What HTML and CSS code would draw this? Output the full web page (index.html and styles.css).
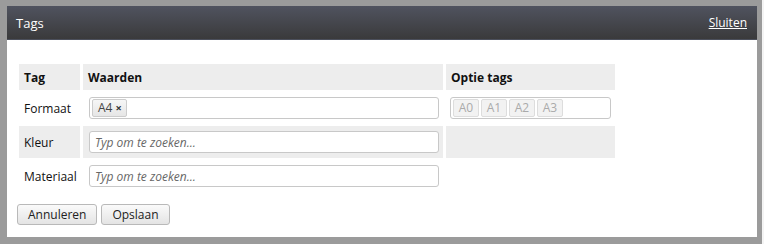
FILE: index.html
```html
<!DOCTYPE html>
<html lang="nl">
<head>
    <meta charset="UTF-8">
    <title>Tags</title>
    <link rel="stylesheet" href="styles.css">
</head>
<body>
    <div class="dialog">
        <div class="dialog-header">
            <span class="dialog-title">Tags</span>
            <a href="#" class="close-link">Sluiten</a>
        </div>
        <div class="dialog-body">
            <table class="tag-table">
                <thead>
                    <tr>
                        <th class="col-tag">Tag</th>
                        <th class="col-values">Waarden</th>
                        <th class="col-options">Optie tags</th>
                    </tr>
                </thead>
                <tbody>
                    <tr>
                        <td>Formaat</td>
                        <td>
                            <div class="tag-input">
                                <span class="chip">A4 <span class="chip-x">&times;</span></span>
                            </div>
                        </td>
                        <td>
                            <div class="tag-input options">
                                <span class="chip muted">A0</span><span class="chip muted">A1</span><span class="chip muted">A2</span><span class="chip muted">A3</span>
                            </div>
                        </td>
                    </tr>
                    <tr class="alt">
                        <td>Kleur</td>
                        <td><input type="text" class="search" placeholder="Typ om te zoeken..."></td>
                        <td></td>
                    </tr>
                    <tr>
                        <td>Materiaal</td>
                        <td><input type="text" class="search" placeholder="Typ om te zoeken..."></td>
                        <td></td>
                    </tr>
                </tbody>
            </table>
            <div class="actions">
                <button>Annuleren</button>
                <button>Opslaan</button>
            </div>
        </div>
    </div>
</body>
</html>
```

FILE: styles.css
```css
body {
    margin: 0;
    height: 244px;
    overflow: hidden;
    font-family: "Open Sans", "DejaVu Sans", sans-serif;
    font-size: 12px;
    color: #111;
    background: linear-gradient(to right, #9b9b9b 762px, #f4f4f4 762px);
}
.dialog {
    margin: 6px 0 0 7px;
    width: 750px;
    height: 231px;
    background-color: #fff;
}
.dialog-header {
    height: 34px;
    box-sizing: border-box;
    padding: 0 10px 0 9px;
    display: flex;
    justify-content: space-between;
    align-items: center;
    background: linear-gradient(#50535f, #3a3a3b);
    border-bottom: 1px solid #4b4f5b;
    color: #fff;
}
.dialog-title {
    font-size: 13px;
}
.close-link {
    color: #fff;
    font-size: 12px;
}
.dialog-body {
    padding: 21px 10px 0 9px;
}
.tag-table {
    table-layout: fixed;
    width: 602px;
    border-spacing: 3px;
    border-collapse: separate;
}
.tag-table th, .tag-table td {
    box-sizing: border-box;
    padding: 0 0 0 5px;
    white-space: nowrap;
    overflow: visible;
}
.tag-table th {
    background-color: #ededed;
    text-align: left;
    font-weight: bold;
    height: 26px;
}
.tag-table td {
    height: 30px;
}
.tag-table .alt td {
    background-color: #ededed;
    height: 32px;
}
.col-tag {
    width: 61px;
}
.col-values {
    width: 360px;
}
.col-options {
    width: 169px;
}
.tag-input, .search {
    box-sizing: border-box;
    width: 350px;
    height: 22px;
    border: 1px solid #c8c8c8;
    border-radius: 3px;
    background-color: #fff;
    display: flex;
    align-items: center;
    padding: 0 2px;
    gap: 2px;
    margin-left: 1px;
}
.tag-input.options {
    width: 161px;
    margin-left: -1px;
}
.search {
    display: block;
    padding: 0 5px;
    font-family: inherit;
    font-size: 12px;
    outline: none;
}
.search::placeholder {
    color: #666;
    font-style: italic;
}
.chip {
    display: inline-block;
    box-sizing: border-box;
    height: 18px;
    line-height: 16px;
    padding: 0 4px 0 5px;
    border: 1px solid #ccc;
    border-radius: 2px;
    background: linear-gradient(#f6f6f6, #e6e6e6);
    font-size: 12px;
    color: #444;
}
.chip-x {
    font-weight: bold;
    font-size: 11px;
    color: #333;
}
.chip.muted {
    width: 26px;
    padding: 0;
    text-align: center;
    color: #aaa;
    background: #f2f2f2;
    border-color: #ddd;
}
.actions {
    display: flex;
    gap: 4px;
    margin-top: 10px;
    margin-left: 1px;
}
.actions button {
    height: 21px;
    padding: 0 10px;
    font-family: inherit;
    font-size: 12px;
    color: #222;
    border: 1px solid #b9b9b9;
    border-radius: 3px;
    background: linear-gradient(#fafafa, #e4e4e4);
    cursor: pointer;
}
```
